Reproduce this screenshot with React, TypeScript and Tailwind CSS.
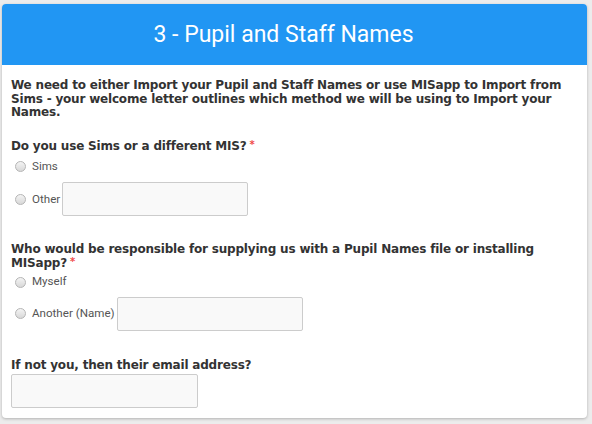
import React from "react";

const Radio = ({ label, withInput, inputWidth = "w-[186px]" }: { label: string; withInput?: boolean; inputWidth?: string }) => (
  <label className="flex items-center">
    <span className="ml-[4px] mr-[6px] h-[11px] w-[11px] rounded-full border border-[#b5b5b5] bg-gradient-to-b from-[#f4f4f4] to-[#d8d8d8]" />
    <span className="font-['Roboto',sans-serif] text-[11.6px] text-[#555]">{label}</span>
    {withInput && (
      <input
        type="text"
        className={`ml-[2px] h-[34px] ${inputWidth} rounded-[2px] border border-[#ccc] bg-[#f9f9f9] outline-none`}
      />
    )}
  </label>
);

const Question = ({ children, required }: { children: React.ReactNode; required?: boolean }) => (
  <p className="font-['DejaVu_Sans',sans-serif] text-[12px] font-bold leading-[13.5px] tracking-[-0.19px] text-[#333]">
    {children}
    {required && <span className="ml-[3px] align-[2px] text-[10px] leading-none text-[#f04a4a]">*</span>}
  </p>
);

export default function App() {
  return (
    <div className="h-[424px] w-[592px] bg-[#ececec] px-[2px] pt-[4px]">
      <div className="h-[414px] w-[585px] rounded-[4px] bg-white shadow-[0_1px_3px_rgba(0,0,0,0.25)]">
        <div className="flex h-[61px] items-center justify-center rounded-t-[4px] bg-[#2196f3] pr-[22px] pt-[2px]">
          <h1 className="font-['Roboto',sans-serif] text-[23px] text-white">3 - Pupil and Staff Names</h1>
        </div>
        <div className="px-[9px] pt-[14px]">
          <Question>
            We need to either Import your Pupil and Staff Names or use MISapp to Import from Sims - your welcome letter outlines
            which method we will be using to Import your Names.
          </Question>

          <div className="mt-[20px]">
            <Question required>Do you use Sims or a different MIS?</Question>
            <div className="mt-[5px] flex flex-col gap-[7px]">
              <Radio label="Sims" />
              <Radio label="Other" withInput />
            </div>
          </div>

          <div className="mt-[27px]">
            <Question required>
              Who would be responsible for supplying us with a Pupil Names file or installing MISapp?
            </Question>
            <div className="mt-[3px] flex flex-col gap-[6px]">
              <Radio label="Myself" />
              <Radio label="Another (Name)" withInput />
            </div>
          </div>

          <div className="mt-[28px]">
            <Question>If not you, then their email address?</Question>
            <input
              type="text"
              className="mt-[2px] h-[34px] w-[187px] rounded-[2px] border border-[#ccc] bg-[#f9f9f9] outline-none"
            />
          </div>
        </div>
      </div>
    </div>
  );
}
